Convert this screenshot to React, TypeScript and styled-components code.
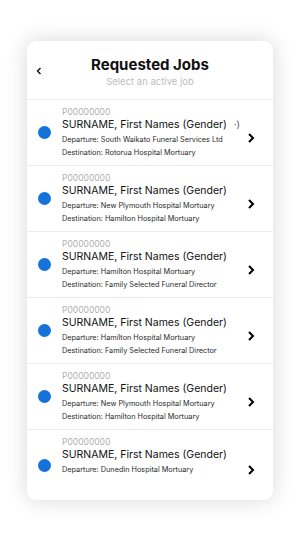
import styled, { createGlobalStyle } from 'styled-components'

interface Job {
  ref: string
  name: string
  departure: string
  destination?: string
  stray?: boolean
}

const jobs: Job[] = [
  {
    ref: 'P00000000',
    name: 'SURNAME, First Names (Gender)',
    departure: 'South Waikato Funeral Services Ltd',
    destination: 'Rotorua Hospital Mortuary',
    stray: true
  },
  {
    ref: 'P00000000',
    name: 'SURNAME, First Names (Gender)',
    departure: 'New Plymouth Hospital Mortuary',
    destination: 'Hamilton Hospital Mortuary'
  },
  {
    ref: 'P00000000',
    name: 'SURNAME, First Names (Gender)',
    departure: 'Hamilton Hospital Mortuary',
    destination: 'Family Selected Funeral Director'
  },
  {
    ref: 'P00000000',
    name: 'SURNAME, First Names (Gender)',
    departure: 'Hamilton Hospital Mortuary',
    destination: 'Family Selected Funeral Director'
  },
  {
    ref: 'P00000000',
    name: 'SURNAME, First Names (Gender)',
    departure: 'New Plymouth Hospital Mortuary',
    destination: 'Hamilton Hospital Mortuary'
  },
  {
    ref: 'P00000000',
    name: 'SURNAME, First Names (Gender)',
    departure: 'Dunedin Hospital Mortuary'
  }
]

export default function App() {
  return (
    <>
      <GlobalStyle />
      <Page>
        <Card>
          <Header>
            <BackButton type="button" aria-label="Back">
              <svg width="6" height="8" viewBox="0 0 6 8">
                <polyline points="4.5,1 1.5,4 4.5,7" fill="none" stroke="#111" strokeWidth="1.4" />
              </svg>
            </BackButton>
            <Title>Requested Jobs</Title>
            <Subtitle>Select an active job</Subtitle>
          </Header>
          <List>
            {jobs.map((job, i) => (
              <Row key={i}>
                <Dot />
                <Info>
                  <Ref>{job.ref}</Ref>
                  <Name>
                    {job.name}
                    {job.stray && <Stray>·)</Stray>}
                  </Name>
                  <Detail>Departure: {job.departure}</Detail>
                  {job.destination && <Detail>Destination: {job.destination}</Detail>}
                </Info>
                <Chevron>
                  <svg width="8" height="10" viewBox="0 0 8 10">
                    <polyline points="2,1 6,5 2,9" fill="none" stroke="#000" strokeWidth="2" />
                  </svg>
                </Chevron>
              </Row>
            ))}
          </List>
        </Card>
      </Page>
    </>
  )
}

const GlobalStyle = createGlobalStyle`
  body {
    margin: 0;
    background: #fff;
    font-family: Inter, "Liberation Sans", sans-serif;
  }
`

const Page = styled.div`
  width: 300px;
  height: 533px;
  padding: 41px 27px 0;
  box-sizing: border-box;
`

const Card = styled.div`
  background: #fff;
  border-radius: 9px;
  box-shadow: 0 0 22px rgba(0, 0, 0, 0.16);
  overflow: hidden;
`

const Header = styled.div`
  position: relative;
  height: 59px;
  display: flex;
  flex-direction: column;
  align-items: center;
  padding-top: 15px;
  box-sizing: border-box;
  border-bottom: 1px solid #ececec;
`

const BackButton = styled.button`
  position: absolute;
  left: 9px;
  top: 26px;
  border: none;
  background: none;
  padding: 0;
  display: flex;
`

const Title = styled.div`
  font-size: 15px;
  font-weight: 700;
  color: #111;
  line-height: 18px;
`

const Subtitle = styled.div`
  font-size: 9.5px;
  color: #bdbdbd;
  line-height: 14px;
  margin-top: 1px;
`

const List = styled.div`
  display: flex;
  flex-direction: column;
`

const Row = styled.div`
  height: 66px;
  display: flex;
  align-items: center;
  border-bottom: 1px solid #ececec;
  box-sizing: border-box;

  &:last-child {
    border-bottom: none;
    height: 70px;
  }
`

const Dot = styled.div`
  width: 13px;
  height: 13px;
  border-radius: 50%;
  background: #1572d8;
  margin: 0 11px 0 11px;
  flex-shrink: 0;
`

const Info = styled.div`
  flex: 1;
  align-self: flex-start;
  padding-top: 7px;
  min-width: 0;
`

const Ref = styled.div`
  font-size: 8.5px;
  color: #b0b0b0;
  line-height: 10px;
`

const Name = styled.div`
  font-size: 10.5px;
  color: #111;
  line-height: 16px;
  white-space: nowrap;
`

const Stray = styled.span`
  margin-left: 7px;
  font-size: 9.5px;
  color: #555;
`

const Detail = styled.div`
  font-size: 7.3px;
  color: #2a2a2a;
  line-height: 13px;
  white-space: nowrap;
`

const Chevron = styled.div`
  display: flex;
  margin: 10px 18px 0 6px;
`
